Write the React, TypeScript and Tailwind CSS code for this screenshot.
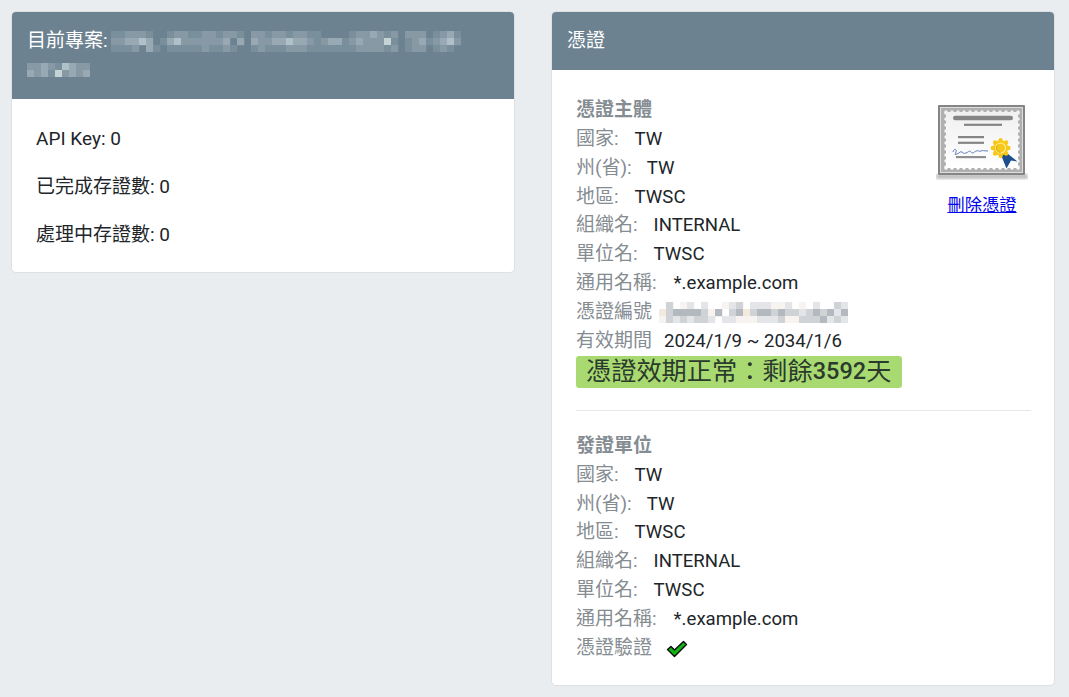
const HEADER_COLORS: Record<string, string> = {
  a: "#7a8f9c",
  b: "#8799a5",
  c: "#98a9b4",
  d: "#b0c0c8",
  e: "#c6d3d4",
};

const SERIAL_COLORS: Record<string, string> = {
  a: "#f6f3f0",
  b: "#e3e5e8",
  c: "#d0d3d6",
  d: "#b4b9bf",
  e: "#f3eadf",
};

// pixelated parts of the screenshot
function Mosaic({ rows, colors, cell = 7 }: { rows: string[]; colors: Record<string, string>; cell?: number }) {
  const cols = Math.max(...rows.map((r) => r.length));
  return (
    <svg width={cols * cell} height={rows.length * cell} className="inline-block align-middle">
      {rows.map((row, y) =>
        row.split("").map((c, x) =>
          colors[c] ? (
            <rect key={`${x}-${y}`} x={x * cell} y={y * cell} width={cell + 0.2} height={cell + 0.2} fill={colors[c]} />
          ) : null,
        ),
      )}
    </svg>
  );
}

function CertificateIcon() {
  const scallops = [];
  for (let i = 0; i < 13; i++) {
    scallops.push(<circle key={`t${i}`} cx={10 + i * 6} cy={9} r={1.7} fill="#f0f0f0" />);
    scallops.push(<circle key={`b${i}`} cx={10 + i * 6} cy={65} r={1.7} fill="#ffffff" />);
  }
  for (let i = 0; i < 10; i++) {
    scallops.push(<circle key={`l${i}`} cx={10} cy={10 + i * 6} r={1.7} fill="#f6f6f6" />);
    scallops.push(<circle key={`r${i}`} cx={82} cy={10 + i * 6} r={1.7} fill="#f6f6f6" />);
  }
  return (
    <svg width="92" height="78" viewBox="0 0 92 78">
      <defs>
        <filter id="soft">
          <feGaussianBlur stdDeviation="1.5" />
        </filter>
        <filter id="scaled">
          <feGaussianBlur stdDeviation="0.4" />
        </filter>
        <linearGradient id="paper" x1="0" y1="0" x2="0" y2="1">
          <stop offset="0" stopColor="#f0f0f0" />
          <stop offset="1" stopColor="#ffffff" />
        </linearGradient>
      </defs>
      <rect x="0" y="71" width="92" height="5" fill="#8a8a8a" opacity="0.55" filter="url(#soft)" />
      <g filter="url(#scaled)">
        <rect x="2" y="2" width="87" height="70" rx="1" fill="#858585" />
        <rect x="4" y="4" width="83" height="66" fill="#dedede" />
        <rect x="5" y="5" width="81" height="64" fill="#b0b0b0" />
        {scallops}
        <rect x="10" y="9" width="72" height="56" fill="url(#paper)" />
        <rect x="17" y="12.8" width="60" height="4.4" rx="2.2" fill="#858585" />
        <rect x="28" y="20.7" width="38" height="2.2" fill="#858585" />
        <rect x="22" y="33" width="26" height="2.2" fill="#858585" />
        <rect x="22" y="38.7" width="26" height="2.2" fill="#858585" />
        <rect x="20" y="53" width="30" height="2.2" fill="#8f8f8f" />
        <path
          d="M17 49c1-4 4-3 3 0s-2 3 1 2 3-3 5-2 1 2 4 1 3-3 5-1 3 0 5-1 3 1 5 0 3 0 7 0"
          fill="none"
          stroke="#4f72b0"
          strokeWidth="0.9"
        />
        <path d="M67 47 L81.5 58.5 L75 57.5 L70.5 65.5 L65 52 Z" fill="#1f4f8c" />
        <circle cx="64.6" cy="45" r="7.5" fill="#f7c916" />
        <g fill="#f7c916">
          <circle cx="64.6" cy="37.2" r="2.2" />
          <circle cx="70.1" cy="39.5" r="2.2" />
          <circle cx="72.4" cy="45" r="2.2" />
          <circle cx="70.1" cy="50.5" r="2.2" />
          <circle cx="64.6" cy="52.8" r="2.2" />
          <circle cx="59.1" cy="50.5" r="2.2" />
          <circle cx="56.8" cy="45" r="2.2" />
          <circle cx="59.1" cy="39.5" r="2.2" />
        </g>
        <circle cx="64.6" cy="45" r="5" fill="none" stroke="#fdec96" strokeWidth="1.2" />
        <path d="M62 41.5a4.5 4.5 0 0 0 2.5 8" fill="none" stroke="#d9a514" strokeWidth="1" />
      </g>
    </svg>
  );
}

function CheckIcon() {
  return (
    <svg width="22" height="18" viewBox="0 0 22 18" className="-ml-[2px] inline-block">
      <path
        d="M1.5 9.5 L5 6.5 L8.5 10 L17.5 1.5 L20.5 4.5 L8.5 16.5 Z"
        fill="#12b312"
        stroke="#0a0a0a"
        strokeWidth="1.4"
        strokeLinejoin="round"
      />
    </svg>
  );
}

function Field({ label, children }: { label: string; children: React.ReactNode }) {
  return (
    <div className="flex h-[28.8px] items-center">
      <span className="mr-[16px] text-[#858c92]">{label}</span>
      <span className="text-[18.6px]">{children}</span>
    </div>
  );
}

function DistinguishedName() {
  return (
    <>
      <Field label="國家:">TW</Field>
      <Field label="州(省):">
        <span className="-ml-px">TW</span>
      </Field>
      <Field label="地區:">TWSC</Field>
      <Field label="組織名:">INTERNAL</Field>
      <Field label="單位名:">TWSC</Field>
      <Field label="通用名稱:">
        <span className="ml-px">*.example.com</span>
      </Field>
    </>
  );
}

export default function App() {
  return (
    <div className="min-h-[697px] bg-[#e9edf0] font-['Roboto','Noto_Sans_CJK_TC',sans-serif] text-[19px] leading-[28.8px] text-[#212529]">
      <div className="flex items-start gap-[36px] pl-[11px] pt-[11px]">
        <section className="w-[504px] overflow-hidden rounded-[5px] border border-[#dde1e4] bg-white">
          <header className="bg-[#6c8291] px-[15px] py-[14.5px] text-white">
            <div className="flex h-[29px] items-center gap-[3px]">
              <span>目前專案:</span>
              <Mosaic
                colors={HEADER_COLORS}
                rows={[
                  "aabbba..abbaabbabba.bbabbabbaa....abbcbab.bbb.abca",
                  "bbccdc.acdbbbbbbc.c.cbbccdccbabccabcbbbea.abcabcdb",
                  "aaab.ca.aaaaabaaba..abaaabbbaaaaaaabbbbab.abb.aba",
                ]}
              />
            </div>
            <div className="flex h-[29px] items-center">
              <Mosaic colors={HEADER_COLORS} rows={["bbcbadcbb", "cbcaebcbc"]} />
            </div>
          </header>
          <div className="flex flex-col gap-[19px] pb-[22.5px] pl-6 pr-6 pt-[26px]">
            <p>API Key: 0</p>
            <p>已完成存證數: 0</p>
            <p>處理中存證數: 0</p>
          </div>
        </section>

        <section className="w-[504px] overflow-hidden rounded-[5px] border border-[#dde1e4] bg-white">
          <header className="bg-[#6c8291] px-[15px] py-[14.5px] text-white">憑證</header>
          <div className="pb-[23px] pl-6 pr-[23px] pt-[26.4px]">
            <div className="flex justify-between">
              <div>
                <h3 className="font-bold text-[#858c92]">憑證主體</h3>
                <DistinguishedName />
                <Field label="憑證編號">
                  <span className="-ml-[9px]">
                    <Mosaic
                      colors={SERIAL_COLORS}
                      rows={[
                        ".c.ab.b..abc.bbbaab.a.b..cb",
                        "ecddddcad.cdecddcdccbcdcdbd",
                        "acbcbccb.bbaaabbbcaacccdbcb",
                      ]}
                    />
                  </span>
                </Field>
                <Field label="有效期間">
                  <span className="-ml-[4px] text-[18.6px]">2024/1/9 ~ 2034/1/6</span>
                </Field>
                <div className="mt-[0.6px] flex h-[32px] w-[326px] items-center rounded-[3px] bg-[#a9da72] pl-[10px] text-[25.2px] leading-none text-[#2a3a2c]">
                  憑證效期正常：剩餘<span className="text-[23.5px] font-medium">3592</span>天
                </div>
              </div>
              <div className="flex w-[98px] flex-col items-center pt-[7px]">
                <CertificateIcon />
                <a href="#" className="mt-[11px] text-[17.3px] leading-[26px] text-[#0000ee] underline">
                  刪除憑證
                </a>
              </div>
            </div>
            <hr className="mb-[21px] mt-[22px] border-[#e6e8ea]" />
            <h3 className="font-bold text-[#858c92]">發證單位</h3>
            <DistinguishedName />
            <Field label="憑證驗證">
              <CheckIcon />
            </Field>
          </div>
        </section>
      </div>
    </div>
  );
}
